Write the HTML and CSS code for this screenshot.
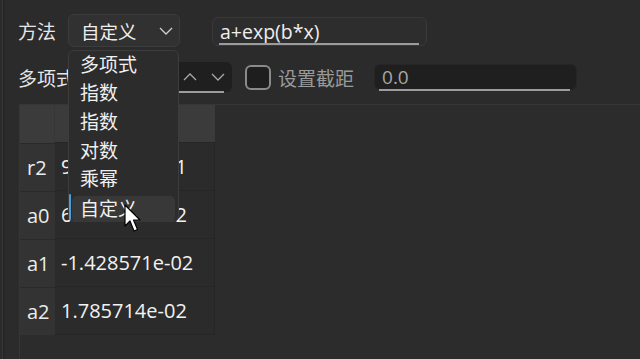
FILE: index.html
```html
<!DOCTYPE html>
<html lang="zh">
<head>
<meta charset="utf-8">
<title>拟合</title>
<link rel="stylesheet" href="styles.css">
</head>
<body>
<div class="app">
  <div class="row row1">
    <span class="label">方法</span>
    <div class="combo">
      <span>自定义</span>
      <svg class="chev" width="14" height="8" viewBox="0 0 14 8"><path d="M1 1 L7 7 L13 1" fill="none" stroke="#cfcfcf" stroke-width="1.3"/></svg>
    </div>
    <div class="field formula"><span>a+exp(b*x)</span></div>
  </div>
  <div class="row row2">
    <span class="label">多项式</span>
    <div class="spin">
      <span class="spinval">2</span>
      <svg class="arrows" width="46" height="10" viewBox="0 0 46 10"><path d="M2 8 L8 2 L14 8" fill="none" stroke="#a8a8a8" stroke-width="1.3"/><path d="M30 2 L36 8 L42 2" fill="none" stroke="#a8a8a8" stroke-width="1.3"/></svg>
    </div>
    <div class="check"></div>
    <span class="checklabel">设置截距</span>
    <div class="field dark intercept"><span>0.0</span></div>
  </div>
  <div class="tablewrap">
    <div class="grid">
      <div class="corner"></div><div class="colhead"></div>
      <div class="rowhead">r2</div><div class="cell">9.642857e-01</div>
      <div class="rowhead">a0</div><div class="cell">6.071429e-02</div>
      <div class="rowhead">a1</div><div class="cell">-1.428571e-02</div>
      <div class="rowhead">a2</div><div class="cell">1.785714e-02</div>
    </div>
  </div>
</div>
<div class="popup">
  <div class="item">多项式</div>
  <div class="item">指数</div>
  <div class="item">指数</div>
  <div class="item">对数</div>
  <div class="item">乘幂</div>
  <div class="item current">自定义</div>
</div>
<svg class="cursor" width="20" height="30" viewBox="0 0 20 30"><path d="M1 1 L1 22 L6 17 L10 27 L13.5 25.5 L9.5 16 L16 16 Z" fill="#ffffff" stroke="#000000" stroke-width="1.2" stroke-linejoin="round"/></svg>
</body>
</html>
```
FILE: styles.css
```css
* { box-sizing: border-box; }
html, body {
  margin: 0;
  width: 640px;
  height: 359px;
  overflow: hidden;
  font-family: "Open Sans", "Noto Sans CJK SC", sans-serif;
  font-size: 19px;
  color: #eeeeee;
}
html { background: #2b2b2b; }
body {
  position: relative;
  background: linear-gradient(to right, #2b2b2b 2px, #363636 2px, #363636 3px, #262626 3px, #262626 5px, #2b2b2b 5px);
}
.app {
  padding: 14px 0 0 18px;
  display: flex;
  flex-direction: column;
  height: 100%;
}
.row { display: flex; align-items: center; }
.row1 { height: 33px; }
.row1 .label { width: 50px; }
.label { color: #e6e6e6; font-family: "Noto Sans CJK SC", sans-serif; font-size: 19px; }
.combo {
  width: 112px;
  height: 33px;
  border: 1px solid #3c3c3c;
  background: #313131;
  border-radius: 6px;
  display: flex;
  align-items: center;
  justify-content: space-between;
  padding: 0 6px 0 12px;
  font-family: "Noto Sans CJK SC", sans-serif;
  font-size: 18.5px;
}
.chev { margin-top: 1px; }
.field {
  height: 29px;
  border: 1px solid #393939;
  border-radius: 6px;
  background: #2d2d2d;
  position: relative;
  display: flex;
  align-items: center;
  padding-left: 7px;
}
.field::after {
  content: "";
  position: absolute;
  left: 6px;
  right: 7px;
  bottom: 0;
  height: 2px;
  background: #9c9c9c;
}
.formula { margin-left: 32px; width: 215px; margin-top: 2px; font-size: 19.5px; }
.formula span { margin-top: -1px; }
.row2 { margin-top: 15px; height: 30px; }
.row2 .label { width: 64px; }
.spin {
  width: 150px;
  height: 30px;
  background: #1f1f1f;
  border-radius: 6px;
  display: flex;
  align-items: center;
  justify-content: space-between;
  padding: 0 4px 0 10px;
  position: relative;
}
.spin::after {
  content: "";
  position: absolute;
  left: 4px;
  right: 8px;
  bottom: -1px;
  height: 2px;
  background: #9c9c9c;
}
.spinval { color: #ffffff; }
.check {
  margin-left: 13px;
  width: 26px;
  height: 25px;
  border: 2px solid #8a8a8a;
  border-radius: 6px;
  background: #1e1e1e;
}
.checklabel {
  margin-left: 7px;
  color: #9a9a9a;
  font-family: "Noto Sans CJK SC", sans-serif;
  font-size: 19px;
}
.dark { background: #1f1f1f; border-color: #262626; }
.intercept { margin-left: 20px; width: 203px; height: 26px; color: #a6a6a6; }
.intercept::after { height: 2px; bottom: -2px; left: 4px; right: 6px; }
.tablewrap {
  margin-top: 12px;
  margin-left: 1px;
  flex: 1;
  border-top: 1px solid #363636;
  border-left: 1px solid #363636;
  background: #2c2c2c;
  margin-right: -20px;
}
.grid {
  display: grid;
  grid-template-columns: 35px 160px;
  grid-template-rows: 38px repeat(4, 48px);
  width: 196px;
  font-size: 20px;
}
.corner, .colhead { background: #3b3b3b; }
.corner { border-right: 1px solid #363636; }
.rowhead {
  background: #333333;
  border-top: 1px solid #292929;
  display: flex;
  align-items: center;
  padding-left: 7px;
  color: #ececec;
}
.cell {
  background: #2b2b2b;
  border-top: 1px solid #262626;
  border-bottom: 1px solid #262626;
  border-right: 1px solid #262626;
  margin-top: -1px;
  display: flex;
  align-items: center;
  padding-left: 6px;
  color: #f2f2f2;
}
.popup {
  position: absolute;
  left: 68px;
  top: 50px;
  width: 111px;
  height: 172px;
  background: #2c2c2c;
  border: 1px solid #3c3c3c;
  border-radius: 6px;
  font-family: "Noto Sans CJK SC", sans-serif;
  font-size: 19px;
  color: #f0f0f0;
  padding: 0 3px;
}
.item {
  height: 28.6px;
  display: flex;
  align-items: center;
  padding-left: 8px;
  padding-bottom: 4px;
}
.item.current {
  background: #383838;
  border-radius: 5px;
  height: 26px;
  margin-top: 2px;
  padding-bottom: 3px;
  position: relative;
}
.item.current::before {
  content: "";
  position: absolute;
  left: -3px;
  top: -2px;
  width: 2px;
  height: 26px;
  background: #4a9fd8;
  border-radius: 1px;
}
.cursor { position: absolute; left: 124px; top: 204px; }
```
